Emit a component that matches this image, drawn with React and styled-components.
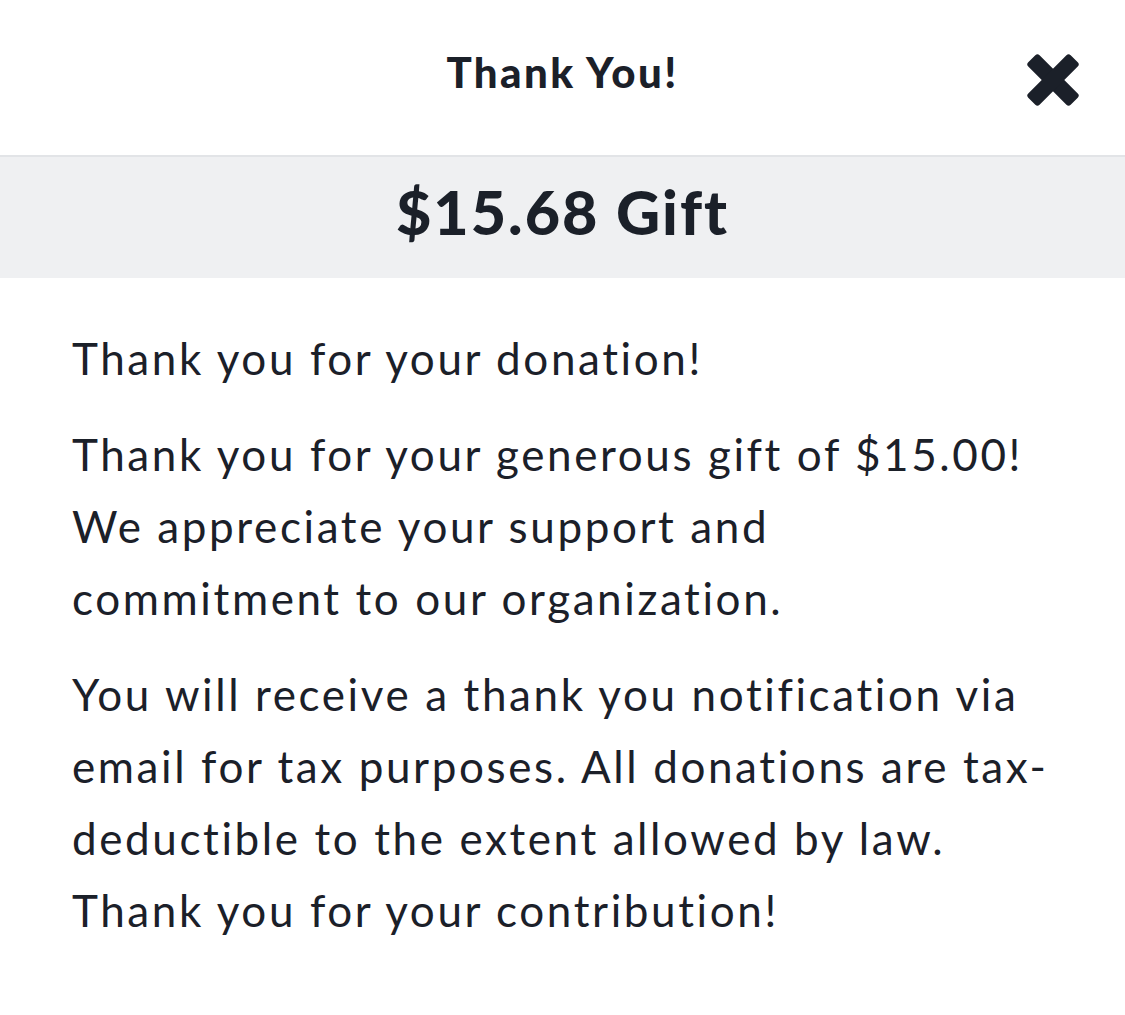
import React from "react"
import styled, { createGlobalStyle } from "styled-components"

const GlobalStyle = createGlobalStyle`
  html, body {
    margin: 0;
    padding: 0;
    background: #ffffff;
  }
  body {
    font-family: Lato, "Noto Sans", sans-serif;
    color: #1b2029;
  }
`;

const Modal = styled.div`
  width: 1125px;
  min-height: 1015px;
  background: #ffffff;
`;

const Header = styled.div`
  position: relative;
  height: 155px;
  display: flex;
  align-items: center;
  justify-content: center;
  border-bottom: 2px solid #e2e4e7;
`;

const Title = styled.h1`
  margin: 0;
  margin-top: -12px;
  font-size: 42px;
  font-weight: 900;
  letter-spacing: 2.4px;
`;

const CloseButton = styled.button`
  position: absolute;
  right: 46px;
  top: 54px;
  width: 52px;
  height: 52px;
  padding: 0;
  border: none;
  background: none;
  cursor: pointer;
  display: flex;
  align-items: center;
  justify-content: center;
`;

const GiftBand = styled.div`
  height: 121px;
  background: #eff0f2;
  display: flex;
  align-items: center;
  justify-content: center;
`;

const GiftAmount = styled.h2`
  margin: 0;
  margin-top: -12px;
  font-size: 61px;
  font-weight: 900;
  letter-spacing: 2px;
`;

const Body = styled.div`
  padding: 44px 72px 40px;
`;

const Paragraph = styled.p`
  margin: 0 0 24px;
  font-size: 44px;
  line-height: 72px;
  font-weight: 400;
  letter-spacing: 2.6px;
  white-space: nowrap;
`;

const CloseIcon = () => (
  <svg width="52" height="52" viewBox="0 0 52 52">
    <g fill="#1b2029">
      <rect x="-4" y="18" width="60" height="16" rx="3" transform="rotate(45 26 26)" />
      <rect x="-4" y="18" width="60" height="16" rx="3" transform="rotate(-45 26 26)" />
    </g>
  </svg>
);

export default function App() {
  return (
    <>
      <GlobalStyle />
      <Modal>
        <Header>
          <Title>Thank You!</Title>
          <CloseButton aria-label="close"><CloseIcon /></CloseButton>
        </Header>
        <GiftBand>
          <GiftAmount>$15.68 Gift</GiftAmount>
        </GiftBand>
        <Body>
          <Paragraph>Thank you for your donation!</Paragraph>
          <Paragraph>
            Thank you for your generous gift of $15.00!<br />
            We appreciate your support and<br />
            commitment to our organization.
          </Paragraph>
          <Paragraph>
            You will receive a thank you notification via<br />
            email for tax purposes. All donations are tax-<br />
            deductible to the extent allowed by law.<br />
            Thank you for your contribution!
          </Paragraph>
        </Body>
      </Modal>
    </>
  )
}
